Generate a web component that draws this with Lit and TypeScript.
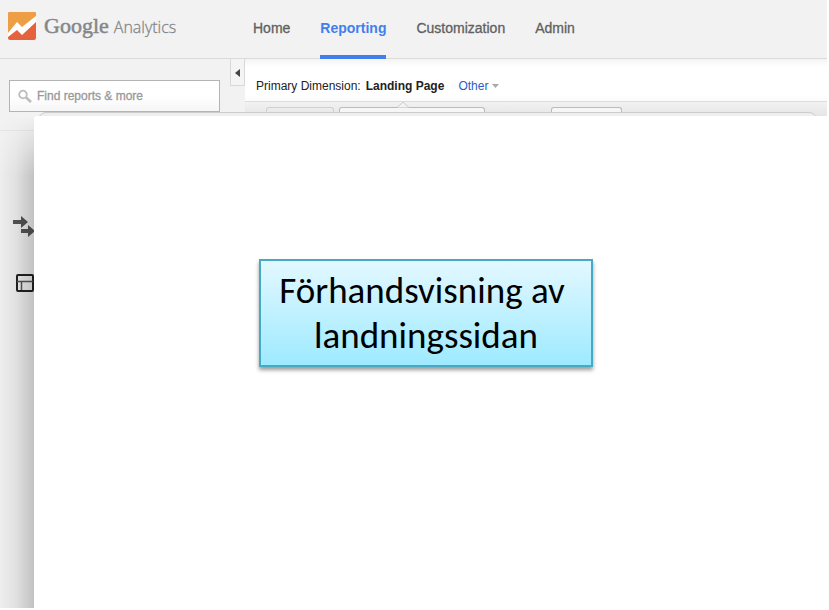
import { LitElement, html, css } from "lit";
import { customElement } from "lit/decorators.js";

@customElement("analytics-header")
class AnalyticsHeader extends LitElement {
  static styles = css`
    :host {
      display: flex;
      height: 58px;
      background: #f2f2f2;
      border-bottom: 1px solid #dadada;
    }
    .brand {
      display: flex;
      align-items: center;
      box-sizing: border-box;
      flex: 0 0 253px;
      padding: 0 0 6px 8px;
      color: #85878a;
      text-decoration: none;
      white-space: nowrap;
    }
    .mark {
      width: 28px;
      height: 28px;
      margin-right: 8px;
    }
    .google {
      font: 22px/28px "Liberation Serif", serif;
      -webkit-text-stroke: 0.5px #85878a;
    }
    .product {
      margin: 2px 0 0 5px;
      font: 300 16px/28px "Open Sans", sans-serif;
      -webkit-text-stroke: 0.3px #85878a;
    }
    nav {
      display: flex;
      gap: 30px;
    }
    nav a {
      box-sizing: border-box;
      height: 59px;
      border-bottom: 4px solid transparent;
      color: #606060;
      font-size: 14px;
      line-height: 56px;
      text-decoration: none;
      -webkit-text-stroke: 0.3px currentColor;
    }
    nav .active {
      border-color: #427fed;
      color: #427fed;
      font-weight: bold;
      -webkit-text-stroke: 0;
    }
  `;
  render() {
    return html`
      <a class="brand" href="#">
        <svg class="mark" viewBox="0 0 28 28" aria-hidden="true">
          <rect width="28" height="28" rx="2" fill="#e5623e" />
          <path d="M2 0H26Q28 0 28 2V8L16 19L10 13L0 22V2Q0 0 2 0Z" fill="#ee9f46" />
          <path d="M0 21L9 10L14 15L28 4V10L14 23L9 18L0 25Z" fill="#fff" />
        </svg>
        <span class="google">Google</span>
        <span class="product">Analytics</span>
      </a>
      <nav>
        <a href="#">Home</a>
        <a href="#" class="active">Reporting</a>
        <a href="#">Customization</a>
        <a href="#">Admin</a>
      </nav>
    `;
  }
}

@customElement("report-sidebar")
class ReportSidebar extends LitElement {
  static styles = css`
    :host {
      display: flex;
      flex: 0 0 245px;
      background: #f2f2f2;
    }
    .main {
      flex: 1;
    }
    .search {
      display: flex;
      align-items: center;
      gap: 4px;
      box-sizing: border-box;
      width: 211px;
      height: 32px;
      margin: 21px 0 18px 9px;
      padding: 0 8px;
      border: 1px solid #b4b4b4;
      background: linear-gradient(#fff 50%, #f6f6f6);
    }
    .search svg {
      flex: none;
      width: 15px;
      height: 15px;
    }
    input {
      flex: 1;
      min-width: 0;
      padding: 0;
      border: 0;
      outline: 0;
      background: none;
      font: 12px/16px "Liberation Sans", Arial, sans-serif;
    }
    input::placeholder {
      color: #999;
      -webkit-text-stroke: 0.3px #999;
    }
    .items {
      display: flex;
      flex-direction: column;
      gap: 32px;
      padding: 84px 0 0 13px;
      border-top: 1px solid #e6e6e6;
    }
    .items a {
      width: 24px;
      height: 24px;
    }
    .items svg {
      display: block;
    }
    .toggle {
      flex: none;
      display: grid;
      place-items: center;
      width: 15px;
      height: 27px;
      padding: 2px 0 0;
      border: 1px solid #d8d8d8;
      border-top: 0;
      background: #f4f4f4;
    }
  `;
  render() {
    return html`
      <div class="main">
        <label class="search">
          <svg viewBox="0 0 15 15" fill="none" stroke="#bcbcbc" aria-hidden="true">
            <circle cx="5" cy="5.500" r="3.800" stroke-width="1.800" />
            <path d="M8 8.500L13 13" stroke-width="2.600" />
          </svg>
          <input type="text" placeholder="Find reports & more" aria-label="Find reports" />
        </label>
        <div class="items">
          <a href="#" aria-label="Behavior">
            <svg width="24" height="24" viewBox="0 0 24 24" fill="#555">
              <path d="M0 5H8V1L15 7L8 13V9H0Z" />
              <path d="M8 14H15V10L22 16L15 22V18H8Z" />
            </svg>
          </a>
          <a href="#" aria-label="Dashboards">
            <svg width="24" height="24" viewBox="0 0 24 24" fill="none" stroke="#222">
              <rect x="4" y="4" width="16" height="16" rx="1" stroke-width="2" />
              <path d="M4 10.500H20M8.500 10.500V19" stroke="#555" stroke-width="1.500" />
            </svg>
          </a>
        </div>
      </div>
      <button class="toggle" aria-label="Collapse navigation">
        <svg width="5" height="8" viewBox="0 0 5 8"><path d="M5 0V8L0 4Z" fill="#444" /></svg>
      </button>
    `;
  }
}

@customElement("report-view")
class ReportView extends LitElement {
  static styles = css`
    :host {
      display: block;
      flex: 1;
      min-width: 0;
      background: #f0f0f0;
    }
    .dimensions {
      display: flex;
      align-items: center;
      box-sizing: border-box;
      height: 43px;
      padding: 12px 0 0 11px;
      border-bottom: 1px solid #ddd;
      background: linear-gradient(#f3f3f3, #fff 8px, #fff 36px, #fbfbfb);
      font-size: 12px;
      color: #222;
      white-space: nowrap;
    }
    .selected {
      position: relative;
      margin: 0 14px 0 5px;
      font-weight: bold;
    }
    .notch {
      position: absolute;
      left: 50%;
      bottom: -15px;
      width: 12px;
      height: 7px;
      margin-left: -8px;
    }
    .other {
      display: flex;
      align-items: center;
      gap: 4px;
      padding: 0;
      border: 0;
      background: none;
      color: #2a5bcc;
      font: inherit;
    }
    .tools {
      display: flex;
      height: 10px;
      padding: 5px 0 0 21px;
      background: linear-gradient(#f2f2f2, #e4e4e4);
    }
    .tool {
      box-sizing: border-box;
      width: 68px;
      border: 1px solid #d0d0d0;
      border-bottom: 0;
      border-radius: 3px 3px 0 0;
    }
    .wide {
      width: 146px;
      margin: 0 66px 0 5px;
      border-color: #bbb;
      background: #f6f6f6;
    }
    .short {
      width: 71px;
      border-color: #bbb;
      background: #f6f6f6;
    }
  `;
  render() {
    return html`
      <div class="dimensions">
        <span>Primary Dimension:</span>
        <span class="selected">
          Landing Page
          <svg class="notch" viewBox="0 0 12 7" aria-hidden="true">
            <path d="M0 6.500L6 1L12 6.500" fill="#f2f2f2" stroke="#ccc" />
          </svg>
        </span>
        <button class="other">
          Other
          <svg width="7" height="4" viewBox="0 0 7 4"><path d="M0 0H7L3.500 4Z" fill="#aaa" /></svg>
        </button>
      </div>
      <div class="tools">
        <div class="tool"></div>
        <div class="tool wide"></div>
        <div class="tool short"></div>
      </div>
    `;
  }
}

@customElement("app-root")
class AppRoot extends LitElement {
  static styles = css`
    :host {
      display: flex;
      flex-direction: column;
      position: relative;
      box-sizing: border-box;
      min-height: 100vh;
      padding: 0 2px 2px 0;
      overflow: hidden;
      background: #fff;
      font-family: "Liberation Sans", Arial, sans-serif;
    }
    .body {
      flex: 1;
      display: flex;
    }
    .edge {
      position: absolute;
      top: 112px;
      left: 38px;
      right: 12px;
      height: 8px;
      border: 1px solid #ccc;
      border-radius: 8px 8px 0 0;
      background: #eee;
    }
    .preview {
      position: absolute;
      inset: 116px 0 0 34px;
      border-radius: 3px 0 0 0;
      background: #fff;
    }
    .shade {
      position: absolute;
      inset: 116px auto 2px 0;
      width: 34px;
      background: linear-gradient(90deg, #00000004, #0001 45%, #0003);
      mask-image: linear-gradient(transparent, #000 60px);
    }
    .callout {
      box-sizing: border-box;
      width: 334px;
      margin: 143px 0 0 225px;
      padding: 7px 0;
      border: 2px solid #46aac5;
      background: linear-gradient(#e3f8ff, #9eeaff);
      box-shadow: 0 3px 4px #0006;
      color: #000;
      font: 37px/45px Carlito, Lato, sans-serif;
      text-align: center;
    }
    .callout p {
      margin: 0;
    }
    .first {
      padding-right: 8px;
    }
  `;
  render() {
    return html`
      <analytics-header></analytics-header>
      <div class="body">
        <report-sidebar></report-sidebar>
        <report-view></report-view>
      </div>
      <div class="edge"></div>
      <div class="shade"></div>
      <div class="preview">
        <div class="callout">
          <p class="first">Förhandsvisning av</p>
          <p>landningssidan</p>
        </div>
      </div>
    `;
  }
}
